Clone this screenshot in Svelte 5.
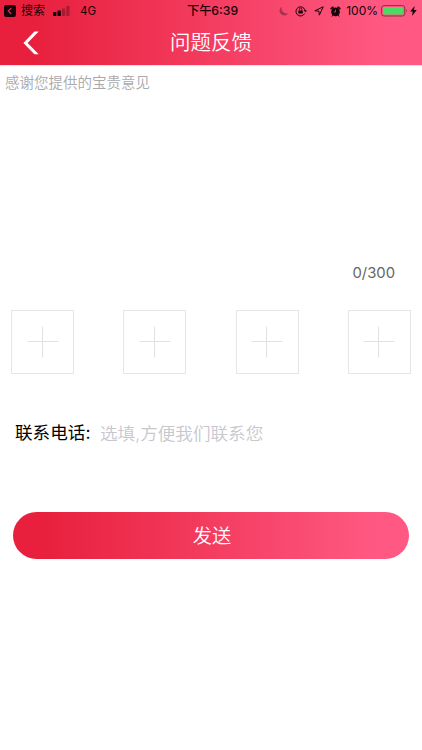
<script>
  const maxLength = 300;

  let feedback = $state("");
  let phone = $state("");
  let photos = $state([null, null, null, null]);
</script>

<div class="app">
  <header>
    <div class="status">
      <svg class="back-app" width="12" height="12" viewBox="0 0 12 12">
        <rect width="12" height="12" rx="2.2" fill="#16040a" />
        <path d="M7.3 3 L4.2 6 L7.3 9" fill="none" stroke="#e8284a" stroke-width="1.2" />
      </svg>
      <span class="search">搜索</span>
      <svg class="signal" width="17" height="10" viewBox="0 0 17 10">
        <rect x="0" y="6" width="3.4" height="4" rx="0.6" fill="#16040a" />
        <rect x="4.5" y="4.5" width="3.4" height="5.5" rx="0.6" fill="#16040a" />
        <rect x="9" y="2.5" width="3.2" height="7.5" rx="0.6" fill="#16040a" opacity="0.3" />
        <rect x="13.3" y="0" width="3.2" height="10" rx="0.6" fill="#16040a" opacity="0.3" />
      </svg>
      <span class="network">4G</span>
      <span class="time">下午6:39</span>
      <div class="indicators">
        <svg width="10" height="10" viewBox="0 0 10 10">
          <path d="M3.2 0.7 A4.6 4.6 0 1 0 9.3 6.9 A4.6 4.6 0 0 1 3.2 0.7Z" fill="#a83252" />
        </svg>
        <svg class="lock" width="12" height="12" viewBox="0 0 12 12">
          <path d="M9.6 8.6 A4.6 4.6 0 1 1 10 5.2" fill="none" stroke="#16040a" stroke-width="1" />
          <path d="M8.6 5.2 H12 L10.4 7.2Z" fill="#16040a" />
          <rect x="3.4" y="5.4" width="4.4" height="3.2" rx="0.4" fill="#16040a" />
          <path d="M4.3 5.5 V4.4 A1.3 1.3 0 0 1 6.9 4.4 V5.5" fill="none" stroke="#16040a" stroke-width="0.8" />
        </svg>
        <svg class="location" width="10" height="10" viewBox="0 0 10 10">
          <path d="M9.2 0.8 L0.8 4.8 L4.9 5.1 L5.3 9.2Z" fill="none" stroke="#16040a" stroke-width="1" stroke-linejoin="round" />
        </svg>
        <svg class="alarm" width="11" height="11" viewBox="0 0 11 11">
          <circle cx="5.5" cy="5.9" r="4.3" fill="#16040a" />
          <path d="M1.2 2.7 L2.9 1.2 M9.8 2.7 L8.1 1.2" stroke="#16040a" stroke-width="1.7" stroke-linecap="round" />
          <path d="M2.8 9 L2 10.2 M8.2 9 L9 10.2" stroke="#16040a" stroke-width="1" stroke-linecap="round" />
          <path d="M5.5 3.6 V6 H3.8" fill="none" stroke="#ff5079" stroke-width="0.7" />
        </svg>
        <span class="percent">100%</span>
        <svg class="battery" width="27" height="12" viewBox="0 0 27 12">
          <rect x="0.6" y="0.6" width="23.2" height="10.4" rx="2.4" fill="none" stroke="#8b3143" stroke-width="1" />
          <rect x="2.1" y="2.1" width="20.2" height="7.4" rx="1.1" fill="#4cd964" />
          <path d="M25 4 Q26.6 5.8 25 7.6Z" fill="#8b3143" />
        </svg>
        <svg class="bolt" width="7" height="10" viewBox="0 0 7 10">
          <path d="M4.6 0 L0.1 5.6 H2.8 L1.9 10 L6.8 4 H4Z" fill="#16040a" />
        </svg>
      </div>
    </div>
    <div class="nav">
      <button class="back" aria-label="返回">
        <svg width="17" height="24" viewBox="0 0 17 24">
          <path d="M11.4 0.6 H15.7 L4.6 11.9 L15.7 23.2 H11.4 L0.4 11.9Z" fill="#fff" />
        </svg>
      </button>
      <h1>问题反馈</h1>
    </div>
  </header>

  <textarea bind:value={feedback} maxlength={maxLength} placeholder="感谢您提供的宝贵意见"></textarea>
  <p class="counter">{feedback.length}/{maxLength}</p>

  <div class="photos">
    {#each photos as photo}
      <button class="photo" aria-label="添加图片">
        <svg width="32" height="32" viewBox="0 0 32 32">
          <path d="M0.5 15.5 H31.5 M15.5 0.5 V31.5" stroke="#e2e2e2" stroke-width="1" />
        </svg>
      </button>
    {/each}
  </div>

  <label class="contact">
    <span>联系电话:</span>
    <input type="tel" bind:value={phone} placeholder="选填,方便我们联系您">
  </label>

  <button class="send">发送</button>
</div>

<style>
  :global(body) {
    margin: 0;
    background: #fff;
  }
  .app {
    display: flex;
    flex-direction: column;
    height: 750px;
    overflow: hidden;
    font-family: Inter, "Noto Sans CJK SC", sans-serif;
  }
  button,
  input,
  textarea {
    padding: 0;
    border: none;
    outline: none;
    background: none;
    font: inherit;
  }
  svg {
    display: block;
    flex: none;
  }
  header {
    height: 65px;
    background: linear-gradient(90deg, #e8203d 8%, #ff5983 92%);
    background-clip: padding-box;
    border-bottom: 1px solid #ffdce5;
  }
  .status {
    display: grid;
    grid-template-columns: 12px 32px 27px 40px 1fr auto;
    align-items: center;
    height: 22px;
    padding: 0 5px 0 4px;
    color: #16040a;
    font-size: 12px;
    line-height: 22px;
    white-space: nowrap;
  }
  .search {
    padding-left: 5px;
  }
  .signal {
    margin-left: 5px;
  }
  .network {
    padding-left: 5px;
    font-size: 11.5px;
  }
  .time {
    padding-left: 72px;
    font-size: 12.2px;
    font-weight: 500;
  }
  .indicators {
    display: flex;
    align-items: center;
  }
  .lock {
    margin-left: 6px;
  }
  .location {
    margin-left: 7px;
  }
  .alarm {
    margin-left: 6px;
  }
  .percent {
    margin-left: 5px;
  }
  .battery {
    margin-left: 3px;
  }
  .bolt {
    margin-left: 2px;
  }
  .nav {
    display: grid;
    grid-template-columns: 60px 1fr 60px;
    align-items: center;
    height: 41px;
  }
  .back {
    padding-left: 23px;
  }
  h1 {
    margin: 0;
    color: #fff;
    font-size: 20.5px;
    font-weight: 350;
    line-height: 41px;
    text-align: center;
  }
  textarea {
    height: 187px;
    padding: 6px 5px 0;
    resize: none;
    font-size: 14.5px;
    line-height: 21px;
    box-sizing: border-box;
  }
  textarea::placeholder {
    color: #a9a9a9;
    font-weight: 350;
    opacity: 1;
  }
  .counter {
    margin: 10px 27px 0 0;
    color: #666;
    font-size: 14.8px;
    line-height: 20px;
    text-align: right;
  }
  .photos {
    display: flex;
    justify-content: space-between;
    margin-top: 27px;
    padding: 0 11px;
  }
  .photo {
    display: flex;
    align-items: center;
    justify-content: center;
    width: 63px;
    height: 64px;
    border: 1px solid #e6e6e6;
    box-sizing: border-box;
  }
  .contact {
    display: flex;
    align-items: center;
    height: 26px;
    margin-top: 46px;
    padding-left: 15px;
    color: #000;
    font-size: 17.6px;
  }
  .contact span {
    flex: none;
    width: 85px;
    line-height: 26px;
    white-space: nowrap;
  }
  .contact input {
    flex: 1;
    min-width: 0;
    height: 26px;
  }
  .contact input::placeholder {
    color: #c7c7cd;
    font-weight: 350;
    opacity: 1;
  }
  .send {
    height: 47px;
    margin: 66px 13px 0;
    padding: 2px 0 0 2px;
    border-radius: 24px;
    background: linear-gradient(90deg, #e8203d 8%, #ff5983 92%);
    color: #fff;
    font-size: 19.3px;
    font-weight: 350;
    line-height: 45px;
  }
</style>
